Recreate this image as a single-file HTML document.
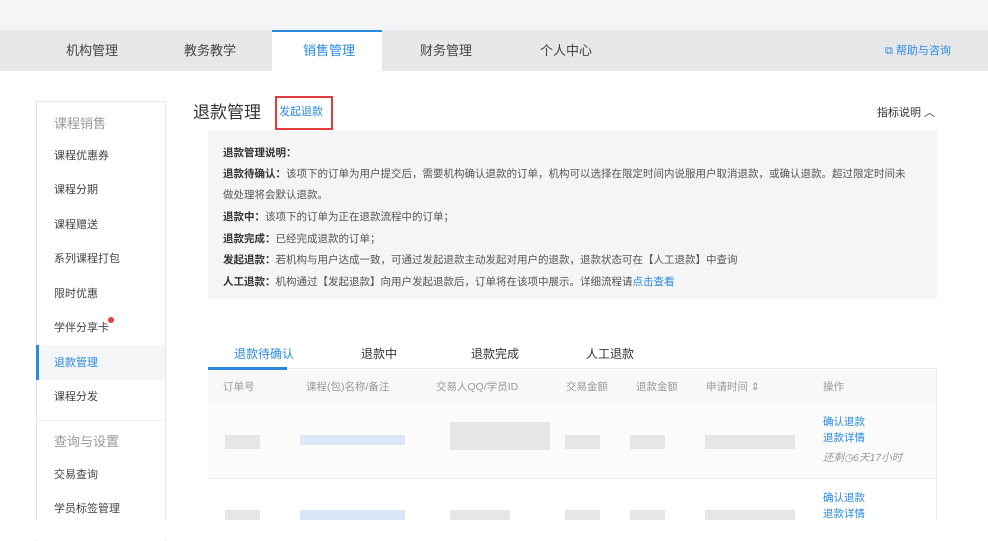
<!DOCTYPE html>
<html><head><meta charset="utf-8"><style>
*{margin:0;padding:0;box-sizing:border-box}
body{width:988px;height:539px;overflow:hidden;background:#fff;font-family:"Liberation Sans","Noto Sans CJK SC",sans-serif;color:#333;position:relative}
.a{position:absolute}
.top{left:0;top:0;width:988px;height:30px;background:#f4f5f7}
.nav{left:0;top:30px;width:988px;height:41px;background:#e6e7e9}
.nav span{position:absolute;top:10px;font-size:13px;color:#444}
.act{left:272px;top:30px;width:110px;height:41px;background:#fff;border-top:2px solid #2a8ae0}
.side{left:36px;top:101px;width:130px;height:440px;border:1px solid #e6e6e6;border-bottom:none}
.si{position:absolute;left:17px;font-size:11px;color:#444}
.blur{position:absolute;background:#e6e6e6}
.info{left:208px;top:131px;width:729px;height:168px;background:#f5f5f5}
.info p{position:absolute;left:15px;font-size:10.5px;color:#555;white-space:nowrap}
.info b{color:#333}
.th{position:absolute;top:379px;font-size:10.5px;color:#999}
.lk{position:absolute;font-size:10.5px;color:#2a8ae0}
</style></head><body>
<div class="a top"></div>
<div class="a nav">
<span style="left:66px">机构管理</span><span style="left:184px">教务教学</span>
<span style="left:420px">财务管理</span><span style="left:540px">个人中心</span>
<span style="left:885px;font-size:11px;color:#2a8ae0;top:12px">⧉ 帮助与咨询</span>
</div>
<div class="a act"><span style="position:absolute;left:31px;top:8px;font-size:13px;color:#2a8ae0">销售管理</span></div>

<div class="a side">
<span class="si" style="top:11px;font-size:13px;color:#999">课程销售</span>
<span class="si" style="top:45px">课程优惠券</span>
<span class="si" style="top:79px">课程分期</span>
<span class="si" style="top:114px">课程赠送</span>
<span class="si" style="top:148px">系列课程打包</span>
<span class="si" style="top:183px">限时优惠</span>
<span class="si" style="top:217px">学伴分享卡</span>
<div style="position:absolute;left:71px;top:215px;width:6px;height:6px;border-radius:50%;background:#e84040"></div>
<div style="position:absolute;left:-1px;top:243px;width:129px;height:35px;background:#f5f6f8;border-left:3px solid #2a8ae0"></div>
<span class="si" style="top:252px;color:#2a8ae0">退款管理</span>
<span class="si" style="top:286px">课程分发</span>
<div style="position:absolute;left:0;top:318px;width:128px;height:1px;background:#eee"></div>
<span class="si" style="top:329px;font-size:13px;color:#999">查询与设置</span>
<span class="si" style="top:364px">交易查询</span>
<span class="si" style="top:398px">学员标签管理</span>
</div>

<div class="a" style="left:193px;top:98px;font-size:17px;color:#333">退款管理</div>
<div class="a" style="left:275px;top:96px;width:58px;height:34px;border:2px solid #e23b3b"></div>
<div class="a" style="left:279px;top:103px;font-size:11px;color:#2a8ae0">发起退款</div>
<div class="a" style="left:877px;top:104px;font-size:11px;color:#333">指标说明 ︿</div>

<div class="a info">
<p style="top:14px"><b>退款管理说明：</b></p>
<p style="top:35px"><b>退款待确认：</b>该项下的订单为用户提交后，需要机构确认退款的订单，机构可以选择在限定时间内说服用户取消退款，或确认退款。超过限定时间未</p>
<p style="top:56px">做处理将会默认退款。</p>
<p style="top:78px"><b>退款中：</b>该项下的订单为正在退款流程中的订单；</p>
<p style="top:100px"><b>退款完成：</b>已经完成退款的订单；</p>
<p style="top:121px"><b>发起退款：</b>若机构与用户达成一致，可通过发起退款主动发起对用户的退款，退款状态可在【人工退款】中查询</p>
<p style="top:143px"><b>人工退款：</b>机构通过【发起退款】向用户发起退款后，订单将在该项中展示。详细流程请<span style="color:#2a8ae0">点击查看</span></p>
</div>

<div class="a" style="left:234px;top:345px;font-size:12px;color:#2a8ae0">退款待确认</div>
<div class="a" style="left:361px;top:345px;font-size:12px">退款中</div>
<div class="a" style="left:471px;top:345px;font-size:12px">退款完成</div>
<div class="a" style="left:586px;top:345px;font-size:12px">人工退款</div>
<div class="a" style="left:208px;top:368px;width:729px;height:1px;background:#e5e5e5"></div>
<div class="a" style="left:208px;top:367px;width:79px;height:3px;background:#2a8ae0"></div>
<div class="a" style="left:208px;top:370px;width:729px;height:32px;background:#f8f8f8"></div>
<span class="th" style="left:223px">订单号</span>
<span class="th" style="left:306px">课程(包)名称/备注</span>
<span class="th" style="left:436px">交易人QQ/学员ID</span>
<span class="th" style="left:566px">交易金额</span>
<span class="th" style="left:636px">退款金额</span>
<span class="th" style="left:706px">申请时间 ⇕</span>
<span class="th" style="left:823px">操作</span>
<div class="a" style="left:208px;top:402px;width:729px;height:76px;background:#fbfbfb"></div>
<div class="a" style="left:208px;top:478px;width:729px;height:1px;background:#eee"></div>
<div class="a" style="left:936px;top:370px;width:1px;height:169px;background:#eee"></div>
<div class="blur" style="left:225px;top:435px;width:35px;height:14px"></div>
<div class="blur" style="left:300px;top:435px;width:105px;height:10px;background:#dbe6f7"></div>
<div class="blur" style="left:450px;top:422px;width:100px;height:28px"></div>
<div class="blur" style="left:565px;top:435px;width:35px;height:14px"></div>
<div class="blur" style="left:630px;top:435px;width:35px;height:14px"></div>
<div class="blur" style="left:705px;top:435px;width:90px;height:14px"></div>
<span class="lk" style="left:823px;top:414px">确认退款</span>
<span class="lk" style="left:823px;top:430px">退款详情</span>
<span class="lk" style="left:823px;top:450px;color:#999;font-style:italic">还剩◷6天17小时</span>
<div class="blur" style="left:225px;top:510px;width:35px;height:12px"></div>
<div class="blur" style="left:300px;top:510px;width:105px;height:12px;background:#dbe6f7"></div>
<div class="blur" style="left:450px;top:510px;width:60px;height:12px"></div>
<div class="blur" style="left:565px;top:510px;width:35px;height:12px"></div>
<div class="blur" style="left:630px;top:510px;width:35px;height:12px"></div>
<div class="blur" style="left:705px;top:510px;width:90px;height:12px"></div>
<span class="lk" style="left:823px;top:490px">确认退款</span>
<span class="lk" style="left:823px;top:506px">退款详情</span>
<div class="a" style="left:0;top:520px;width:988px;height:19px;background:#fff"></div>
</body></html>
